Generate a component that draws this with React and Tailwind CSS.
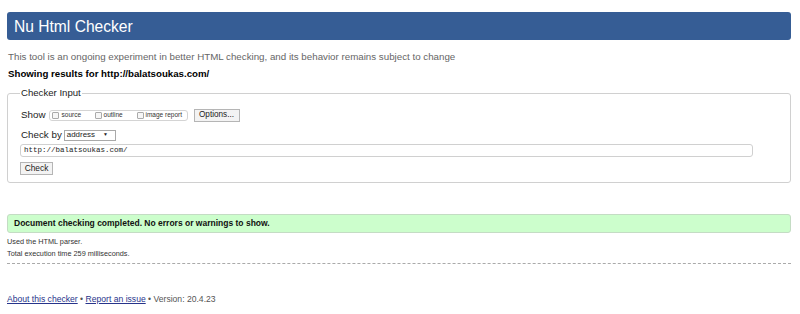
export default function App() {
  return (
    <div className="w-[800px] h-[314px] bg-white overflow-hidden font-['Liberation_Sans',Arial,sans-serif] text-black">
      <div className="pl-[7px] pr-[9px] pt-[12px]">
        <div className="h-[28px] rounded-[3px] bg-[#365d95] pl-[7px] flex items-center">
          <h1 className="text-[15.6px] leading-none text-white font-normal pt-[1px]">Nu Html Checker</h1>
        </div>
        <p className="mt-[10px] h-[14px] leading-[14px] text-[9.75px] text-[#666] pl-[1px]">
          This tool is an ongoing experiment in better HTML checking, and its behavior remains subject to change
        </p>
        <p className="mt-[3px] h-[14px] leading-[14px] text-[9.7px] font-bold pl-[1px]">
          Showing results for http://balatsoukas.com/
        </p>
        <fieldset className="mt-[6px] border border-[#d0d0d0] rounded-[3px] pl-[12px] pr-[37px] pb-[7px] min-w-0">
          <legend className="text-[9.6px] leading-[12px] text-[#222] px-[1px]">Checker Input</legend>
          <div className="mt-[9px] h-[14px] flex items-center">
            <span className="text-[9.8px] text-[#222] mr-[3px] ml-[1px]">Show</span>
            <span className="h-[11px] w-[139px] border border-[#d4d4d4] rounded-[3px] flex items-center pl-[2px] text-[6.5px] text-[#333]">
              <span className="w-[43px] flex items-center">
                <span className="w-[7px] h-[7px] border border-[#aaa] rounded-[1px] bg-[#f6f6f6] mr-[3px]"></span>
                <span>source</span>
              </span>
              <span className="w-[42px] flex items-center">
                <span className="w-[7px] h-[7px] border border-[#aaa] rounded-[1px] bg-[#f6f6f6] mr-[2px]"></span>
                <span>outline</span>
              </span>
              <span className="flex items-center">
                <span className="w-[7px] h-[7px] border border-[#aaa] rounded-[1px] bg-[#f6f6f6] mr-[2px]"></span>
                <span>image report</span>
              </span>
            </span>
            <span className="ml-[6px] h-[13px] w-[46px] border border-[#b5b5b5] bg-[#f3f3f3] flex items-center justify-center text-[8.2px] text-[#222]">Options...</span>
          </div>
          <div className="mt-[7px] h-[12px] flex items-center">
            <span className="text-[9.8px] text-[#222] ml-[1px] mr-[2px]">Check by</span>
            <span className="h-[11px] w-[52px] border border-[#a9a9a9] bg-white flex items-center justify-between pl-[2px] pr-[7px] text-[7.9px] text-[#222]">
              <span>address</span>
              <span className="text-[5px]">▼</span>
            </span>
          </div>
          <div className="mt-[3px] h-[13px] border border-[#d0d0d0] rounded-[3px] flex items-center pl-[3px] text-[7.5px] text-[#222] font-['Liberation_Mono',monospace]">
            http://balatsoukas.com/
          </div>
          <div className="mt-[5px]">
            <span className="h-[13px] w-[33px] border border-[#b5b5b5] bg-[#f3f3f3] flex items-center justify-center text-[8.4px] text-[#222]">Check</span>
          </div>
        </fieldset>
        <div className="mt-[31px] h-[19px] border border-[#c4dcc4] rounded-[3px] bg-[#ccfecc] flex items-center pl-[6px] text-[8.5px] font-bold text-[#111]">
          Document checking completed. No errors or warnings to show.
        </div>
        <p className="mt-[3px] h-[12px] leading-[12px] text-[7.3px] text-[#333]">Used the HTML parser.</p>
        <p className="h-[12px] leading-[12px] text-[7.3px] text-[#333]">Total execution time 259 milliseconds.</p>
        <div className="mt-[3px] border-t border-dashed border-[#aaa]"></div>
        <p className="mt-[29px] text-[8.6px] leading-[12px] text-[#555]">
          <a className="underline text-[#27348b]">About this checker</a> • <a className="underline text-[#27348b]">Report an issue</a> • Version: 20.4.23
        </p>
      </div>
    </div>
  );
}
